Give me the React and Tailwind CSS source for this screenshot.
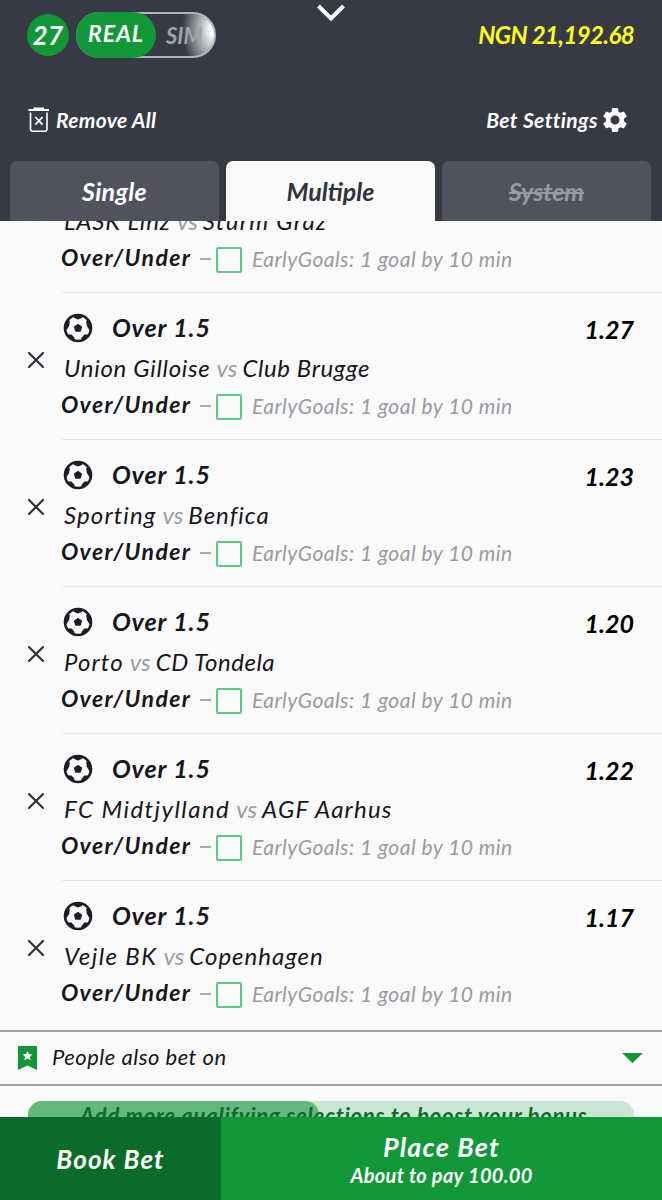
import { X } from "lucide-react";

const matches = [
  { home: "LASK Linz", away: "Sturm Graz", odds: "1.25", homeSpacing: "tracking-[0.9px]", awaySpacing: "tracking-[1.3px]" },
  { home: "Union Gilloise", away: "Club Brugge", odds: "1.27", homeSpacing: "tracking-[0.7px]", awaySpacing: "tracking-[0.6px]" },
  { home: "Sporting", away: "Benfica", odds: "1.23", homeSpacing: "tracking-[1.1px]", awaySpacing: "tracking-[1px]" },
  { home: "Porto", away: "CD Tondela", odds: "1.20", homeSpacing: "tracking-[1.1px]", awaySpacing: "tracking-[0.5px]" },
  { home: "FC Midtjylland", away: "AGF Aarhus", odds: "1.22", homeSpacing: "tracking-[1.45px]", awaySpacing: "tracking-[1.2px]" },
  { home: "Vejle BK", away: "Copenhagen", odds: "1.17", homeSpacing: "tracking-[1.4px]", awaySpacing: "tracking-[1px]" },
];

function TrashIcon() {
  return (
    <svg width="22" height="26" viewBox="0 0 22 26" fill="none" stroke="#fff">
      <path d="M0.5 3H21" strokeWidth="2" />
      <path d="M5.5 1.5H16" strokeWidth="2" />
      <path d="M2.5 5.5V22Q2.5 24.2 4.7 24.2H16.8Q19 24.2 19 22V5.5" strokeWidth="1.6" />
      <path d="M7.3 10L14.6 17.6M14.6 10L7.3 17.6" strokeWidth="1.8" />
    </svg>
  );
}

function GearIcon() {
  return (
    <svg width="30" height="30" viewBox="0 0 24 24" fill="#fff">
      <path d="M19.14 12.94c.04-.3.06-.61.06-.94 0-.32-.02-.64-.07-.94l2.03-1.58a.49.49 0 0 0 .12-.61l-1.92-3.32a.488.488 0 0 0-.59-.22l-2.39.96c-.5-.38-1.03-.7-1.62-.94l-.36-2.54a.484.484 0 0 0-.48-.41h-3.84c-.24 0-.43.17-.47.41l-.36 2.54c-.59.24-1.13.57-1.62.94l-2.39-.96c-.22-.08-.47 0-.59.22L2.74 8.87c-.12.21-.08.47.12.61l2.03 1.58c-.05.3-.09.63-.09.94s.02.64.07.94l-2.03 1.58a.49.49 0 0 0-.12.61l1.92 3.32c.12.22.37.29.59.22l2.39-.96c.5.38 1.03.7 1.62.94l.36 2.54c.05.24.24.41.48.41h3.84c.24 0 .44-.17.47-.41l.36-2.54c.59-.24 1.13-.56 1.62-.94l2.39.96c.22.08.47 0 .59-.22l1.92-3.32c.12-.22.07-.47-.12-.61l-2.01-1.58zM12 15.6A3.6 3.6 0 1 1 12 8.4a3.6 3.6 0 0 1 0 7.2z" />
    </svg>
  );
}

function BallIcon() {
  return (
    <svg className="ml-px shrink-0" width="30" height="30" viewBox="0 0 30 30">
      <circle cx="15" cy="15" r="13" fill="none" stroke="#1b1e25" strokeWidth="2.6" />
      <g fill="#1b1e25">
        <path d="M15 10.8l4.2 3-1.6 5h-5.2l-1.6-5z" />
        <path d="M9 2.6Q15 0.6 21 2.6L18.8 5 15 6.4 11.2 5z" />
        <path d="M1.5 17Q1 9.5 5 5.6L6.8 8.6 6.2 12.8 3.6 17z" />
        <path d="M28.5 17Q29 9.5 25 5.6L23.2 8.6 23.8 12.8 26.4 17z" />
        <path d="M12.2 28.6Q7 27 3.8 21.6L8.6 21.6 11.2 24.6z" />
        <path d="M17.8 28.6Q23 27 26.2 21.6L21.4 21.6 18.8 24.6z" />
      </g>
    </svg>
  );
}

function MatchRow({ home, away, odds, homeSpacing, awaySpacing }) {
  return (
    <div className="group flex h-[147px] shrink-0">
      <div className="w-[62px] shrink-0 pl-[22px] pt-[53px]">
        <X size={28} color="#30343e" strokeWidth={1.9} />
      </div>
      <div className="flex flex-1 flex-col border-b border-[#e6e8ec] pr-7 group-last:border-transparent">
        <div className="mt-[15px] flex h-[40px] items-center">
          <BallIcon />
          <span className="-mt-[2px] ml-[19px] flex-1 text-[25px] font-bold tracking-[0.9px]">Over 1.5</span>
          <span className="mt-[2px] text-[25px] font-bold text-black">{odds}</span>
        </div>
        <div className="flex h-[39px] items-center pl-[2px] text-[24px] leading-[32px]">
          <span className={homeSpacing}>{home}</span>
          <span className="ml-[6px] mr-[5px] text-[#9a9ca5]">vs</span>
          <span className={awaySpacing}>{away}</span>
        </div>
        <div className="mt-px flex h-[36px] items-center">
          <span className="-ml-px -mt-[4px] w-[139px] text-[23px] font-bold tracking-[1.4px]">Over/Under</span>
          <span className="-mt-px h-[2px] w-[11px] bg-[#a9abb3]" />
          <span className="ml-[5px] mt-[2px] h-[26px] w-[26px] rounded-[2px] border-2 border-[#5cc987]" />
          <span className="-mt-[2px] ml-[10px] text-[21px] tracking-[0.45px] text-[#989ba4]">EarlyGoals: 1 goal by 10 min</span>
        </div>
      </div>
    </div>
  );
}

export default function App() {
  return (
    <div className="flex h-[1200px] w-[662px] flex-col overflow-hidden whitespace-nowrap bg-[#fafafa] font-['Lato',sans-serif] italic leading-none text-[#15171c]">
      {/* Header */}
      <header className="flex h-[221px] shrink-0 flex-col bg-[#373a45]">
        <div className="flex h-[70px] items-center pl-[27px] pr-7">
          <div className="flex h-[42px] w-[42px] items-center justify-center rounded-full bg-[#109737] text-[26px] font-bold tracking-[0.5px] text-white">
            27
          </div>
          <div className="ml-[7px] flex h-[46px] w-[140px] rounded-full border-2 border-[#b3b5be] bg-[radial-gradient(ellipse_32px_48px_at_100%_38%,#ffffff_10%,#373a45_100%)]">
            <span className="-my-[2px] -ml-[2px] flex w-[80px] items-center justify-center rounded-full bg-[#109737] pb-1 text-[23px] font-bold tracking-[0.9px] text-white">
              REAL
            </span>
            <span className="ml-[10px] mt-[8px] text-[22px] font-bold leading-[28px] text-[#a1a3ab]">SIM</span>
          </div>
          <svg className="mb-[44px] ml-[101px]" width="28" height="18" viewBox="0 0 28 18" fill="none" stroke="#fff" strokeWidth="4">
            <path d="M1.5 2L14 14.5 26.5 2" />
          </svg>
          <span className="ml-auto text-[24px] font-bold tracking-[-0.6px] text-[#ffff14]">NGN 21,192.68</span>
        </div>
        <div className="flex h-[91px] items-center pl-[28px] pr-[32px] pt-[8px] text-[21px] font-bold text-white">
          <TrashIcon />
          <span className="ml-[6px] tracking-[0.3px]">Remove All</span>
          <span className="ml-auto mr-[2px] tracking-[0.4px]">Bet Settings</span>
          <GearIcon />
        </div>
        <div className="flex gap-[7px] pl-[10px] pr-[11px] text-[25px] font-bold leading-[30px]">
          <div className="flex h-[60px] flex-1 items-center justify-center rounded-t-[7px] bg-[#50535e] tracking-[0.3px] text-white">Single</div>
          <div className="flex h-[60px] flex-1 items-center justify-center rounded-t-[7px] bg-[#fafafa] text-[#30333d]">Multiple</div>
          <div className="flex h-[60px] flex-1 items-center justify-center rounded-t-[7px] bg-[#50535e] text-[#979aa3]">
            <span className="line-through decoration-2">System</span>
          </div>
        </div>
      </header>

      {/* Selections, scrolled part way */}
      <main className="flex min-h-0 flex-1 flex-col overflow-hidden">
        <div className="-mt-[75px] flex shrink-0 flex-col">
          {matches.map((match) => (
            <MatchRow key={match.home} {...match} />
          ))}
        </div>
        <div className="mt-[2px] flex h-[56px] shrink-0 items-center border-y-2 border-[#9fa1aa] pl-[18px] pr-[19px]">
          <svg width="19" height="24" viewBox="0 0 19 24">
            <path d="M0 0H19V24L9.5 19.5 0 24z" fill="#109737" />
            <path d="M9.5 5l1.5 3.1 3.4.4-2.5 2.3.7 3.4-3.1-1.7-3.1 1.7.7-3.4-2.5-2.3 3.4-.4z" fill="#fff" />
          </svg>
          <span className="-mt-[2px] ml-[15px] text-[22px] tracking-[0.5px]">People also bet on</span>
          <svg className="ml-auto" width="21" height="10" viewBox="0 0 21 10">
            <path d="M0 0H21L10.5 10z" fill="#109737" />
          </svg>
        </div>
        <div className="mx-7 mt-[15px] h-[30px] shrink-0 rounded-[14px] bg-[#c9e6d2]">
          <div className="flex h-[30px] w-[291px] items-center rounded-[14px] bg-[#61b97e] pl-[52px]">
            <span className="text-[22px] font-bold tracking-[0.75px] text-[#0c6b29]">
              Add more qualifying selections to boost your bonus
            </span>
          </div>
        </div>
      </main>

      {/* Actions */}
      <footer className="flex h-[83px] shrink-0 font-bold text-white">
        <div className="flex w-[221px] items-center justify-center bg-[#0a6c28] text-[26px] tracking-[1.1px]">Book Bet</div>
        <div className="flex flex-1 flex-col items-center justify-center gap-[5px] bg-[#109737]">
          <span className="text-[27px] tracking-[1.2px]">Place Bet</span>
          <span className="text-[20px] tracking-[0.3px]">About to pay 100.00</span>
        </div>
      </footer>
    </div>
  );
}
